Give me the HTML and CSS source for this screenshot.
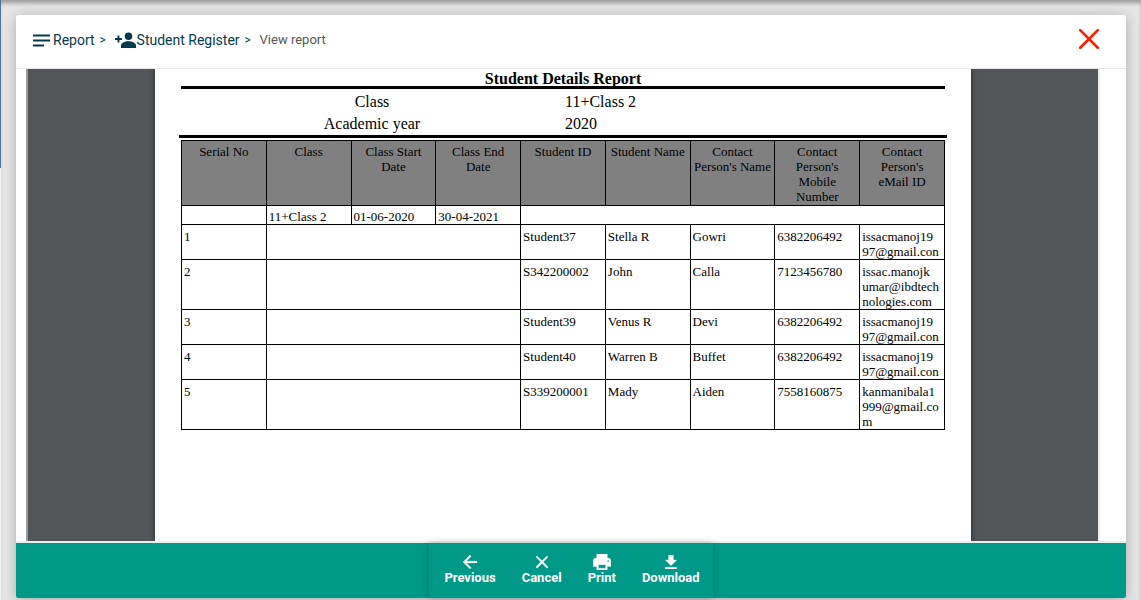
FILE: index.html
```html
<!DOCTYPE html>
<html lang="en">
<head>
<meta charset="utf-8">
<title>View report</title>
<link rel="stylesheet" href="styles.css">
</head>
<body>
<div class="side-edge"></div>
<main class="modal">
  <header class="modal-header">
    <nav class="breadcrumb" aria-label="Breadcrumb">
      <a class="crumb" href="#"><svg class="crumb-icon" viewBox="0 0 18 14" aria-hidden="true"><path d="M0 1.500h17v2H0zM0 6.500h17v2H0zM0 11.500h11v2H0z"/></svg>Report</a>
      <span class="separator">&gt;</span>
      <a class="crumb" href="#"><svg class="crumb-icon person" viewBox="0 0 22 16" aria-hidden="true"><path d="M13.500 8a3.800 3.800 0 1 0 0-7.600 3.800 3.800 0 0 0 0 7.600zm0 1.300c-3 0-7.500 1.500-7.500 4.300V16h15v-2.400c0-2.800-4.500-4.300-7.500-4.300zM4.400 6V3.500H2.500V6H0v1.900h2.500v2.500h1.900V7.900h2.500V6z"/></svg>Student Register</a>
      <span class="separator">&gt;</span>
      <span class="current">View report</span>
    </nav>
    <button class="close" type="button" aria-label="Close"><svg viewBox="0 0 20 20" aria-hidden="true"><path d="M2 1l16 16M18 1l-16 16"/></svg></button>
  </header>
  <section class="viewer">
    <article class="sheet">
      <h1 class="title">Student Details Report</h1>
      <dl class="summary">
        <dt>Class</dt><dd>11+Class 2</dd>
        <dt>Academic year</dt><dd>2020</dd>
      </dl>
      <table class="report">
        <thead>
          <tr><th>Serial No</th><th>Class</th><th>Class Start Date</th><th>Class End Date</th><th>Student ID</th><th>Student Name</th><th>Contact Person's Name</th><th>Contact Person's Mobile Number</th><th>Contact Person's<br>eMail ID</th></tr>
        </thead>
        <tbody>
          <tr class="group"><td></td><td>11+Class 2</td><td>01-06-2020</td><td>30-04-2021</td><td colspan="5"></td></tr>
          <tr><td>1</td><td colspan="3"></td><td>Student37</td><td>Stella R</td><td>Gowri</td><td>6382206492</td><td>issacmanoj19<br>97@gmail.con</td></tr>
          <tr><td>2</td><td colspan="3"></td><td>S342200002</td><td>John</td><td>Calla</td><td>7123456780</td><td>issac.manojk<br>umar@ibdtech<br>nologies.com</td></tr>
          <tr><td>3</td><td colspan="3"></td><td>Student39</td><td>Venus R</td><td>Devi</td><td>6382206492</td><td>issacmanoj19<br>97@gmail.con</td></tr>
          <tr><td>4</td><td colspan="3"></td><td>Student40</td><td>Warren B</td><td>Buffet</td><td>6382206492</td><td>issacmanoj19<br>97@gmail.con</td></tr>
          <tr><td>5</td><td colspan="3"></td><td>S339200001</td><td>Mady</td><td>Aiden</td><td>7558160875</td><td>kanmanibala1<br>999@gmail.co<br>m</td></tr>
        </tbody>
      </table>
    </article>
  </section>
  <footer class="modal-footer">
    <div class="actions">
      <button class="action" type="button"><svg viewBox="4 4 16 16" aria-hidden="true"><path d="M20 11H7.830l5.590-5.590L12 4l-8 8 8 8 1.410-1.410L7.830 13H20z"/></svg>Previous</button>
      <button class="action" type="button"><svg viewBox="4 4 16 16" aria-hidden="true"><path d="M19 6.410L17.590 5 12 10.590 6.410 5 5 6.410 10.590 12 5 17.590 6.410 19 12 13.410 17.590 19 19 17.590 13.410 12z"/></svg>Cancel</button>
      <button class="action" type="button"><svg class="print" viewBox="2 3 20 18" aria-hidden="true"><path fill-rule="evenodd" d="M19 7.500h-1V3H6v4.500H5c-1.660 0-3 1.340-3 3V17h4v4h12v-4h4v-6.500c0-1.660-1.340-3-3-3zM16 19H8v-4h8v4zm3-7a1 1 0 1 1 0-2 1 1 0 0 1 0 2z"/></svg>Print</button>
      <button class="action" type="button"><svg viewBox="4 3 16 17" aria-hidden="true"><path d="M19 9h-4V3H9v6H5l7 7zM5 18v2h14v-2z"/></svg>Download</button>
    </div>
  </footer>
</main>
</body>
</html>
```
FILE: styles.css
```css
* { box-sizing: border-box; }

body {
  margin: 0;
  height: 100vh;
  padding: 15px 15px 2px 16px;
  display: flex;
  overflow: hidden;
  background: #e6e6e6;
  box-shadow: inset 0 4px 4px -1px #999;
  font-family: Roboto, sans-serif;
}

.side-edge {
  position: absolute;
  left: 0;
  top: 0;
  width: 1px;
  height: 100%;
  background: linear-gradient(#4b7890 28%, #f4f4f4 28%);
}

.modal {
  flex: 1;
  min-width: 0;
  display: flex;
  flex-direction: column;
  background: #fff;
  border-radius: 2px;
  box-shadow: 0 2px 14px rgba(0, 0, 0, .26);
}

.modal-header {
  height: 54px;
  flex: none;
  padding: 0 26px 3px 17px;
  display: flex;
  align-items: center;
  justify-content: space-between;
  border-bottom: 1px solid #e8e8e8;
}

.breadcrumb {
  display: flex;
  align-items: center;
  gap: 5px;
  font-size: 14px;
  line-height: 20px;
}

.crumb {
  display: flex;
  align-items: center;
  gap: 2px;
  color: #053b4b;
  text-decoration: none;
}

.crumb-icon { width: 18px; height: 14px; fill: currentColor; }
.crumb-icon.person { width: 22px; height: 16px; margin-right: -2px; }
.separator { width: 10px; font-size: 12px; color: #053b4b; }
.current { font-size: 13px; color: #555; }

.close {
  padding: 0;
  border: 0;
  background: none;
}

.close svg {
  display: block;
  width: 22px;
  height: 22px;
  fill: none;
  stroke: #ff1e00;
  stroke-width: 2.4;
  stroke-linecap: round;
}

.viewer {
  flex: 1;
  min-height: 0;
  margin: 0 26px 0 10px;
  border-left: 2px solid #9a9a9a;
  border-right: 2px solid #eee;
  display: flex;
  justify-content: center;
  overflow: hidden;
  background: #525659;
}

.sheet {
  width: 100%;
  max-width: 816px;
  padding: 0 26px;
  background: #fff;
  box-shadow: 0 0 5px rgba(0, 0, 0, .6);
  color: #000;
  font-family: "Liberation Serif", "Times New Roman", serif;
}

.title {
  margin: 0;
  height: 20px;
  border-bottom: 3px solid #000;
  font-size: 16px;
  line-height: 20px;
  text-align: center;
}

.summary {
  margin: 0 -2px 2px;
  padding: 2px 2px 0;
  display: grid;
  grid-template-columns: 1fr 1fr;
  border-bottom: 3px solid #000;
  font-size: 16px;
  line-height: 22px;
}

.summary dt { text-align: center; }
.summary dd { margin: 0; padding-left: 2px; }

.report {
  width: 100%;
  table-layout: fixed;
  border-collapse: collapse;
  font-size: 13px;
  line-height: 15px;
}

.report th,
.report td {
  padding: 4px 2px 0;
  border: 1px solid #000;
  vertical-align: top;
  text-align: left;
}

.report th {
  padding: 3px 2px 1px;
  background: #808080;
  font-weight: 400;
  text-align: center;
}

.report .group td { padding-top: 3px; }

.modal-footer {
  flex: none;
  height: 57px;
  display: flex;
  justify-content: center;
  border-top: 2px solid #eee;
  border-radius: 0 0 2px 2px;
  background: #009988;
}

.actions {
  padding: 0 13px 0 15px;
  display: flex;
  align-items: center;
  gap: 26px;
  box-shadow: 0 0 7px rgba(0, 0, 0, .25);
}

.action {
  display: flex;
  flex-direction: column;
  align-items: center;
  padding: 0;
  border: 0;
  background: none;
  color: #fff;
  font: 700 13px/16px Roboto, sans-serif;
}

.action svg {
  width: 16px;
  height: 14px;
  margin-bottom: 1px;
  fill: currentColor;
  stroke: currentColor;
  stroke-width: .3px;
}

.action .print { width: 18px; height: 16px; margin: -1px 0 0; }
```
